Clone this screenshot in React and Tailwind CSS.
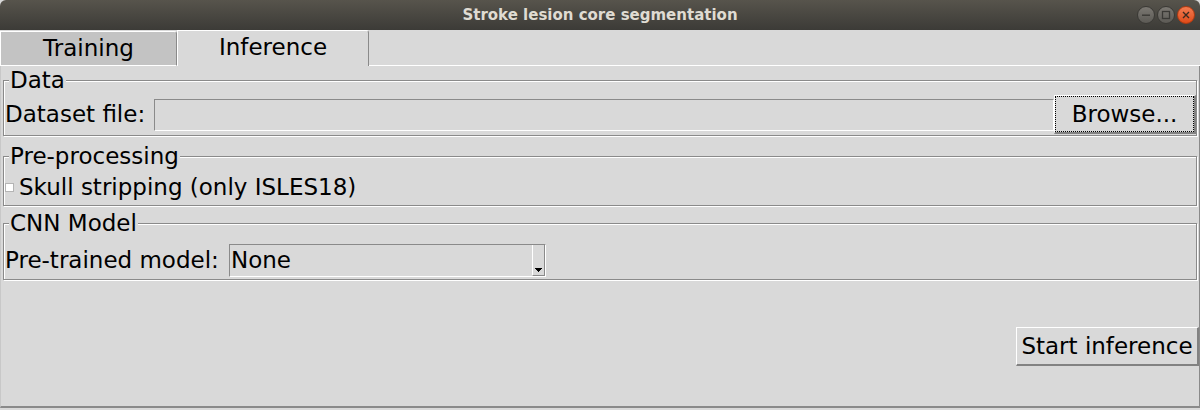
import React from "react";

const WinButton = ({ kind }) => {
  const close = kind === "close";
  return (
    <div
      className={`w-[18px] h-[18px] rounded-full flex items-center justify-center border ${
        close
          ? "bg-gradient-to-b from-[#f37b4f] to-[#df4a16] border-[#b23a10]"
          : "bg-gradient-to-b from-[#7b7872] to-[#5c5a55] border-[#3a3935]"
      }`}
    >
      <svg width="10" height="10" viewBox="0 0 10 10">
        {kind === "min" && <rect x="1" y="4.5" width="8" height="1.4" fill="#3a3935" />}
        {kind === "max" && (
          <rect x="1.5" y="1.5" width="7" height="7" fill="none" stroke="#3a3935" strokeWidth="1.3" />
        )}
        {close && (
          <path d="M2 2 L8 8 M8 2 L2 8" stroke="#3c2a20" strokeWidth="1.4" />
        )}
      </svg>
    </div>
  );
};

const Frame = ({ title, className = "", children }) => (
  <fieldset
    className={`mx-[2px] min-w-0 border border-[#8a8a8a] shadow-[inset_1px_1px_0_#fff,1px_1px_0_#fff] p-0 ${className}`}
  >
    <legend className="ml-[5px] px-[1px] bg-[#d9d9d9] leading-[26px]">{title}</legend>
    {children}
  </fieldset>
);

const RaisedButton = ({ label, focused, className = "" }) => (
  <button
    className={`flex items-stretch p-0 bg-[#d9d9d9] border-t border-l border-r-2 border-b-2 border-t-white border-l-white border-r-[#828282] border-b-[#828282] ${className}`}
  >
    <span
      className={`flex-1 flex items-center justify-center ${
        focused ? "border border-dotted border-black" : ""
      }`}
    >
      {label}
    </span>
  </button>
);

export default function App() {
  return (
    <div className="w-[1200px] h-[410px] overflow-hidden bg-[#d9d9d9] flex flex-col font-['DejaVu_Sans',sans-serif] text-[23px] text-black">
      {/* window title bar */}
      <div className="h-[30px] shrink-0 rounded-t-[6px] bg-gradient-to-b from-[#57544c] to-[#3c3b37] grid grid-cols-[1fr_auto_1fr] items-center">
        <div />
        <div className="text-[15px] font-bold text-[#dfdbd2]">
          Stroke lesion core segmentation
        </div>
        <div className="flex justify-end gap-[2px] pr-[5px]">
          <WinButton kind="min" />
          <WinButton kind="max" />
          <WinButton kind="close" />
        </div>
      </div>

      {/* notebook tabs */}
      <div className="h-[36px] shrink-0 flex">
        <div className="mt-[1px] w-[177px] bg-[#c3c3c3] border-t border-l border-b border-white border-r border-r-[#8a8a8a] rounded-tr-[3px] flex items-center justify-center">
          Training
        </div>
        <div className="w-[192px] border-t border-l border-white border-r border-r-[#8a8a8a] rounded-tr-[3px] flex items-center justify-center pb-[2px]">
          Inference
        </div>
        <div className="flex-1 border-b border-white" />
      </div>

      {/* inference page */}
      <div className="h-[342px] shrink-0 flex flex-col border-l border-l-[#c8c8c8] border-r border-r-[#8a8a8a] border-b-2 border-b-[#8a8a8a]">
        <Frame title="Data" className="mt-[1px]">
          <div className="mt-[2px] h-[39px] mb-[1px] flex items-center">
            <span className="w-[150px] shrink-0 pl-[1px]">Dataset file:</span>
            <div className="flex-1 h-[32px] border-t border-l border-[#8a8a8a] border-b border-r border-b-white border-r-white" />
            <RaisedButton label="Browse..." focused className="w-[142px] h-[39px]" />
          </div>
        </Frame>

        <Frame title="Pre-processing" className="mt-[7px]">
          <div className="h-[36px] flex items-center pl-[1px]">
            <span className="w-[9px] h-[9px] bg-white border border-[#b4b4b4] mr-[5px] mt-[1px]" />
            <span>Skull stripping (only ISLES18)</span>
          </div>
        </Frame>

        <Frame title="CNN Model" className="mt-[4px]">
          <div className="mt-[6px] h-[36px] mb-[1px] flex items-center pl-[1px]">
            <span className="w-[224px] shrink-0">Pre-trained model:</span>
            <div className="w-[317px] h-[33px] flex border-t border-l border-[#8a8a8a] border-b border-r border-b-white border-r-white">
              <div className="flex-1 flex items-center pl-[1px]">None</div>
              <div className="w-[13px] flex items-end justify-center pb-[3px] border-l border-white border-r border-b border-r-[#8a8a8a] border-b-[#8a8a8a]">
                <svg width="7" height="4" viewBox="0 0 7 4">
                  <path d="M0 0 H7 V1 H6 V2 H5 V3 H4 V4 H3 V3 H2 V2 H1 V1 H0 Z" fill="#000" />
                </svg>
              </div>
            </div>
          </div>
        </Frame>

        <div className="mt-[47px] flex justify-end">
          <RaisedButton label="Start inference" className="w-[183px] h-[39px]" />
        </div>
      </div>
    </div>
  );
}
